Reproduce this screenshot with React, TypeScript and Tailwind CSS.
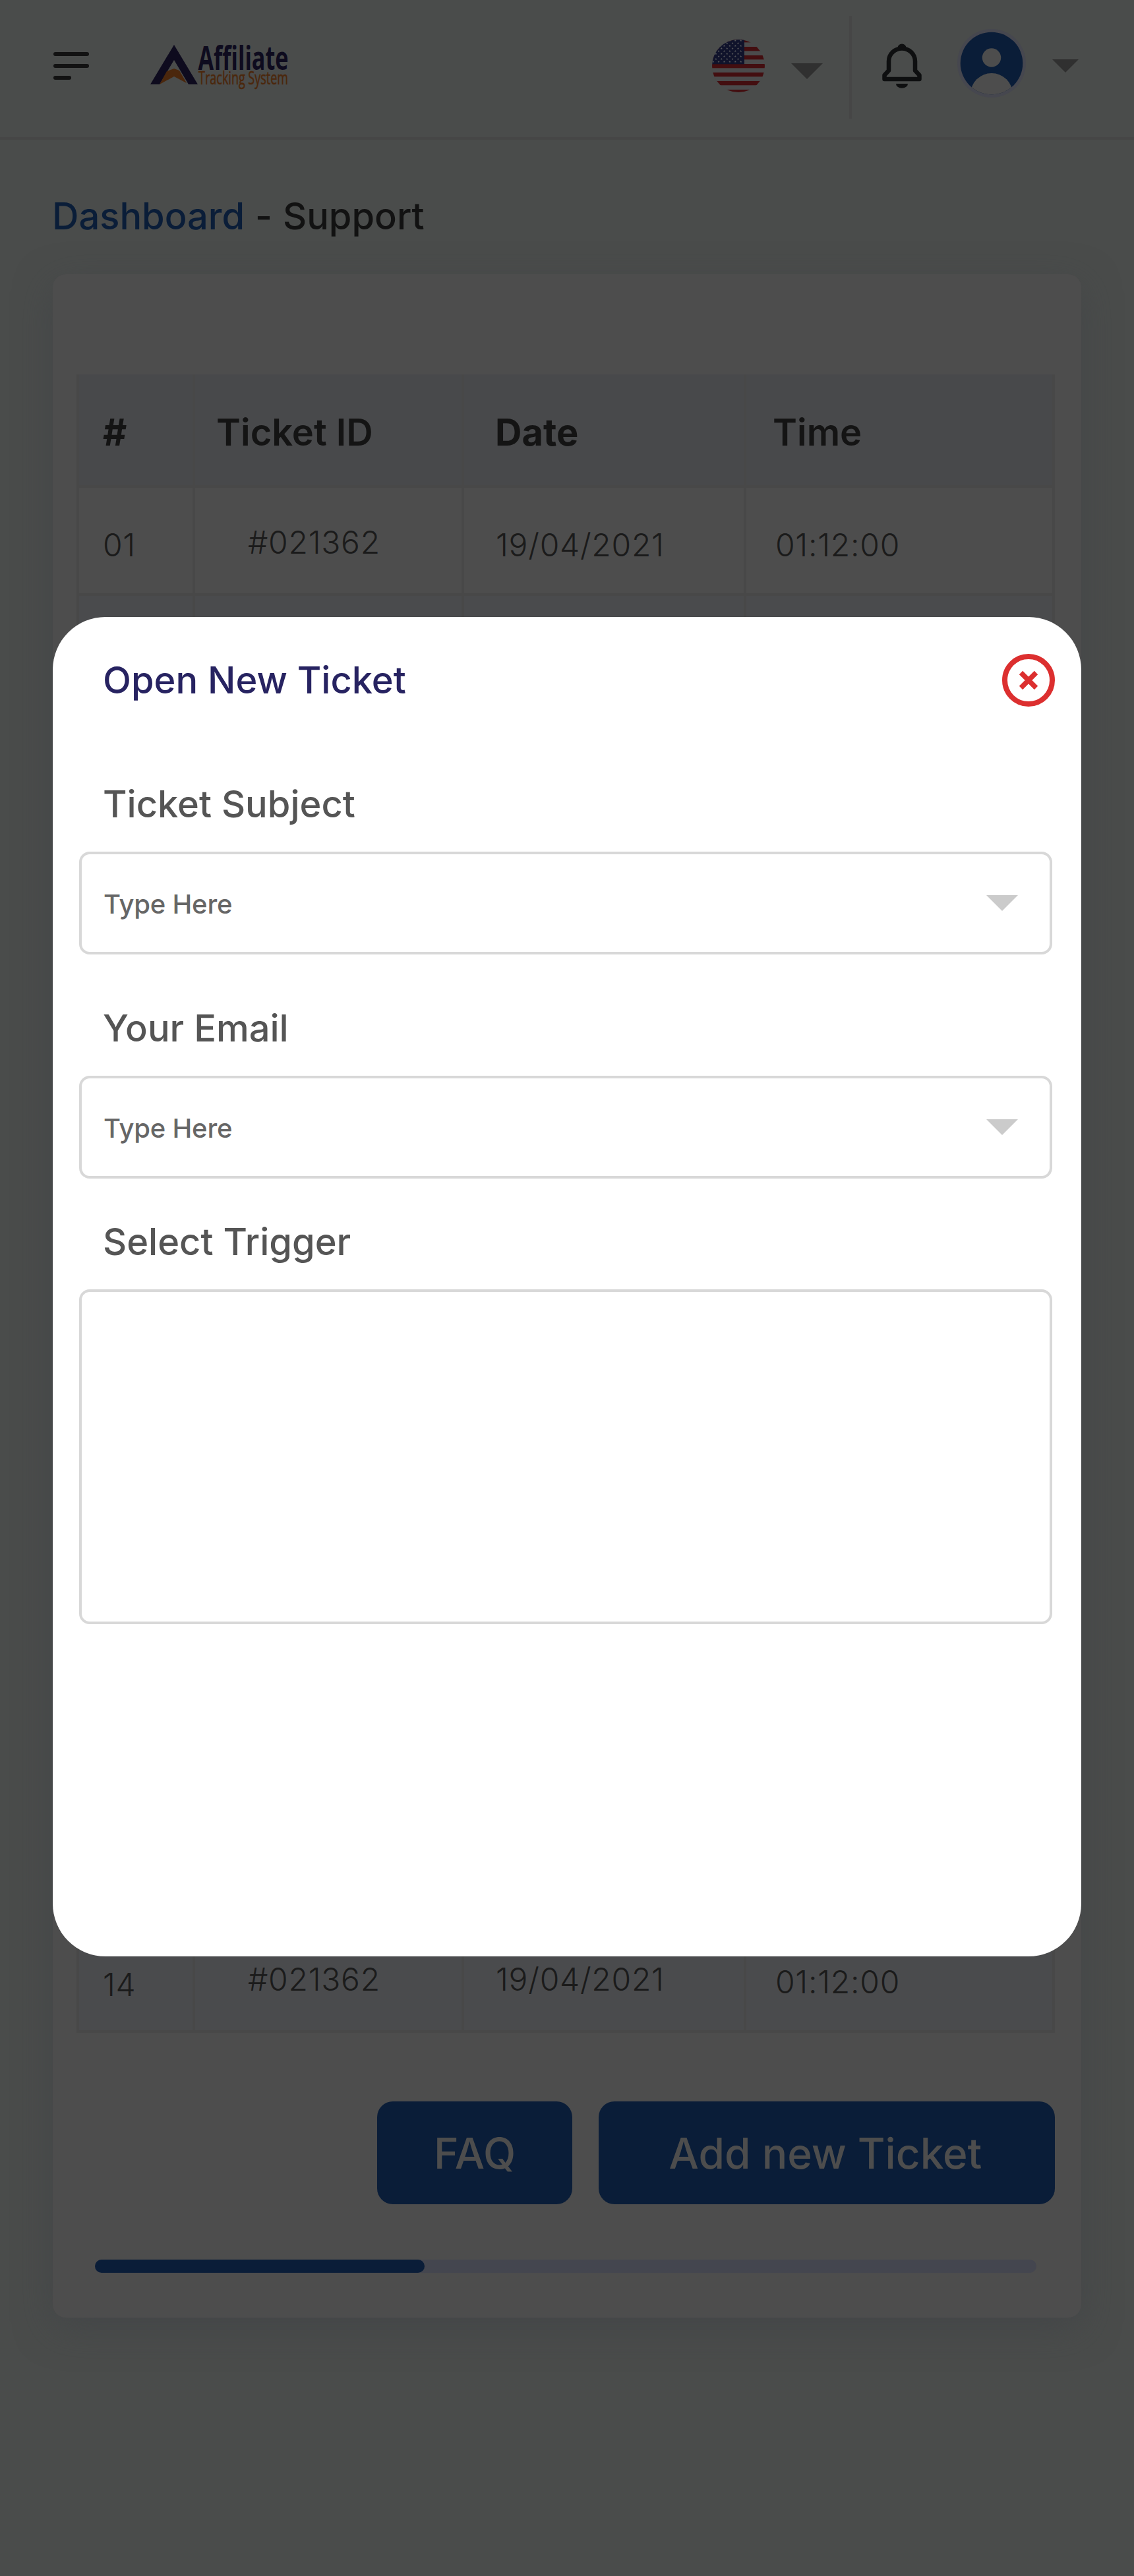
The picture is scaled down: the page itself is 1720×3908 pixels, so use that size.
import React from "react";

const ticket = { id: "#021362", date: "19/04/2021", time: "01:12:00" };
const blank = { id: "", date: "", time: "" };

// Only the first and the last row stay visible around the open dialog.
const rows = Array.from({ length: 14 }, (_, i) => {
  const visible = i === 0 || i === 13;
  return { key: i, n: visible ? String(i + 1).padStart(2, "0") : "", ...(visible ? ticket : blank) };
});

const stars = Array.from({ length: 9 }, (_, r) =>
  Array.from({ length: 6 }, (_, c) => ({ x: 1.7 + c * 8.4 + (r % 2 ? 4.2 : 0), y: 1.4 + r * 4 })),
)
  .flat()
  .filter((s) => s.x < 47);

function Caret({ className }: { className: string }) {
  return (
    <svg viewBox="0 0 48 24" preserveAspectRatio="none" className={className} fill="currentColor">
      <path d="M0 0H48L24 24Z" />
    </svg>
  );
}

function Logo() {
  return (
    <svg className="h-[92px] w-[220px]" viewBox="0 -16 220 92">
      <path d="M36 0L72 60H58L36 23L14 60H0Z" fill="#0e0b1e" />
      <path d="M14 60L25 40L36 36L44 39L55 58L36 48Z" fill="#4b270c" />
      <text x="72.500" y="37.500" fontFamily="Open Sans" fontWeight="700" fontSize="50" textLength="137" lengthAdjust="spacingAndGlyphs" fill="#0e0b1e">Affiliate</text>
      <text x="73" y="60" fontFamily="Open Sans" fontWeight="500" fontSize="27" textLength="136" lengthAdjust="spacingAndGlyphs" fill="#4b270c" stroke="#4b270c" strokeWidth="0.600">Tracking System</text>
    </svg>
  );
}

function Flag() {
  return (
    <svg className="size-20" viewBox="0 0 80 80">
      <clipPath id="flag"><circle cx="40" cy="40" r="40" /></clipPath>
      <g clipPath="url(#flag)">
        <rect width="80" height="80" fill="#4b4b4c" />
        {[-2, 11, 24, 37, 50, 63, 76].map((y) => (
          <rect key={y} y={y} width="80" height="6.3" fill="#430e10" />
        ))}
        <rect width="49" height="37.3" fill="#10132b" />
        {stars.map((s, i) => (
          <path
            key={i}
            transform={`translate(${s.x} ${s.y})`}
            d="M0-1.700L.45-.5 1.600-.5.7.3 1 1.500 0 .8-1 1.500-.7.3-1.600-.5-.45-.5Z"
            fill="#55565a"
          />
        ))}
      </g>
    </svg>
  );
}

function Bell() {
  return (
    <svg className="h-[68px] w-[60px]" viewBox="0 0 60 68" fill="none">
      <path d="M30 7.500C19 7.500 10 16 10 27V41L3.500 48V54H56.500V48L50 41V27C50 16 41 7.500 30 7.500Z" stroke="#0e0f10" strokeWidth="6.500" strokeLinejoin="round" />
      <path d="M23.500 6.500A6.500 6 0 0 1 36.500 6.500ZM21 61H39A9 6.800 0 0 1 21 61Z" fill="#0e0f10" />
    </svg>
  );
}

function Avatar() {
  return (
    <svg className="size-[104px]" viewBox="0 0 104 104">
      <clipPath id="avatar"><circle cx="52" cy="52" r="47.300" /></clipPath>
      <circle cx="52" cy="52" r="52" fill="#46474f" />
      <g clipPath="url(#avatar)">
        <rect width="104" height="104" fill="#0a1d38" />
        <circle cx="52" cy="43.500" r="14.200" fill="#4d4d4d" />
        <circle cx="52" cy="99" r="32" fill="#4d4d4d" />
      </g>
    </svg>
  );
}

function Field({ className }: { className: string }) {
  return (
    <div className={"flex h-[156px] items-center justify-between rounded-2xl border-4 border-[#d8d8d8] pr-12 pl-[33px] " + className}>
      <span className="pt-[3px] text-[40px] leading-[48px] font-medium tracking-[-0.005em] text-[#666]">Type Here</span>
      <Caret className="h-6 w-12 text-[#cbcbcb]" />
    </div>
  );
}

export default function App() {
  return (
    <div className="relative h-[3908px] w-[1720px] overflow-hidden bg-[#4a4c4b] font-['Inter',sans-serif]">
      <header className="flex h-[212px] items-start border-b-4 border-[#464646]">
        <div className="mt-[79px] ml-[81px] flex w-[54px] flex-col gap-3">
          <span className="h-1.5 rounded-full bg-[#121212]" />
          <span className="h-1.5 rounded-full bg-[#121212]" />
          <span className="h-1.5 w-[27px] rounded-full bg-[#121212]" />
        </div>
        <div className="mt-[52px] ml-[93px]"><Logo /></div>
        <div className="mt-[60px] ml-[632px]"><Flag /></div>
        <Caret className="mt-24 ml-10 h-6 w-12 text-[#303030]" />
        <div className="mt-6 ml-10 h-[156px] w-1 bg-[#464646]" />
        <div className="mt-[66px] ml-[46px]"><Bell /></div>
        <div className="mt-11 ml-[54px]"><Avatar /></div>
        <Caret className="mt-[90px] ml-10 h-5 w-10 text-[#303030]" />
      </header>

      <h1 className="mt-[84px] ml-[79px] flex gap-4 text-[56px] leading-[64px] font-medium text-[#121212]">
        <span className="text-[#0a1d38]">Dashboard</span>
        <span>-</span>
        <span>Support</span>
      </h1>

      <main className="mt-14 ml-20 h-[3100px] w-[1560px] rounded-[20px] bg-[#4d4d4d] pt-[152px] pl-9 shadow-[0_16px_56px_rgba(64,67,70,0.6)]">
        <table className="w-[1484px] table-fixed border-separate border-spacing-0 border-l-4 border-[#484848] text-left text-[48px] font-light tracking-[0.015em] text-[#1b1b1b]">
          <colgroup>
            <col className="w-[176px]" />
            <col className="w-[408px]" />
            <col className="w-[428px]" />
            <col className="w-[468px]" />
          </colgroup>
          <thead>
            <tr className="h-[172px] bg-[#48494b] text-[56px] leading-[68px] tracking-normal text-[#141414]">
              <th className="border-r-4 border-b-4 border-[#484848] pt-2 pl-9 font-bold">#</th>
              <th className="border-r-4 border-b-4 border-[#484848] pt-2 pl-8 font-semibold">Ticket ID</th>
              <th className="border-r-4 border-b-4 border-[#484848] pt-2 pl-[47px] font-bold">Date</th>
              <th className="border-r-4 border-b-4 border-[#484848] pt-2 pl-10 font-semibold">Time</th>
            </tr>
          </thead>
          <tbody>
            {rows.map((r, i) => {
              const last = i === 13;
              return (
                <tr key={r.key} className={(i === 0 || last ? "h-[164px] " : "h-[168px] ") + (i % 2 ? "bg-[#4a4b4d]" : "bg-[#4d4d4d]")}>
                  <td className={"border-r-4 border-b-4 border-[#484848] pl-9 leading-[60px] " + (last ? "pt-[22px]" : "pt-[14px]")}>{r.n}</td>
                  <td className="border-r-4 border-b-4 border-[#484848] pt-1.5 pl-20 leading-[60px]">{r.id}</td>
                  <td className={"border-r-4 border-b-4 border-[#484848] pl-[48px] leading-[60px] " + (last ? "pt-1.5" : "pt-[14px]")}>{r.date}</td>
                  <td className="border-r-4 border-b-4 border-[#484848] pt-[14px] pl-11 leading-[60px]">{r.time}</td>
                </tr>
              );
            })}
          </tbody>
        </table>

        <div className="mt-[104px] mr-10 flex justify-end gap-10 text-[64px] font-medium text-[#4d4d4d]">
          <button className="h-[156px] w-[296px] rounded-3xl bg-[#0a1d38] pt-0.5">FAQ</button>
          <button className="h-[156px] w-[692px] rounded-3xl bg-[#0a1d38] pt-0.5 pr-1">Add new Ticket</button>
        </div>

        <div className="mt-[84px] ml-7 h-5 w-[1428px] rounded-[10px] bg-[#44464f]">
          <div className="h-5 w-[500px] rounded-[10px] bg-[#0a1d38]" />
        </div>
      </main>

      <section className="absolute top-[936px] left-20 h-[2032px] w-[1560px] rounded-[80px] bg-white px-10 pt-14">
        <div className="flex h-20 items-center justify-between pl-[36px]">
          <h2 className="text-[56px] leading-[68px] font-medium text-[#272361]">Open New Ticket</h2>
          <svg className="size-20" viewBox="0 0 80 80" fill="none" stroke="#dc2f2f">
            <circle cx="40" cy="40" r="36" strokeWidth="8" />
            <path d="M28.500 28.500L51.500 51.500M51.500 28.500L28.500 51.500" strokeWidth="7.500" />
          </svg>
        </div>
        <label className="mt-[114px] block pl-9 text-[56px] leading-[68px] font-medium text-[#555]">Ticket Subject</label>
        <Field className="mt-[38px] w-[1476px]" />
        <label className="mt-[78px] block pl-9 text-[56px] leading-[68px] font-medium text-[#555]">Your Email</label>
        <Field className="mt-[38px] w-[1476px]" />
        <label className="mt-[62px] block pl-9 text-[56px] leading-[68px] font-medium text-[#555]">Select Trigger</label>
        <div className="mt-[38px] h-[508px] w-[1476px] rounded-2xl border-4 border-[#d8d8d8]" />
      </section>
    </div>
  );
}
